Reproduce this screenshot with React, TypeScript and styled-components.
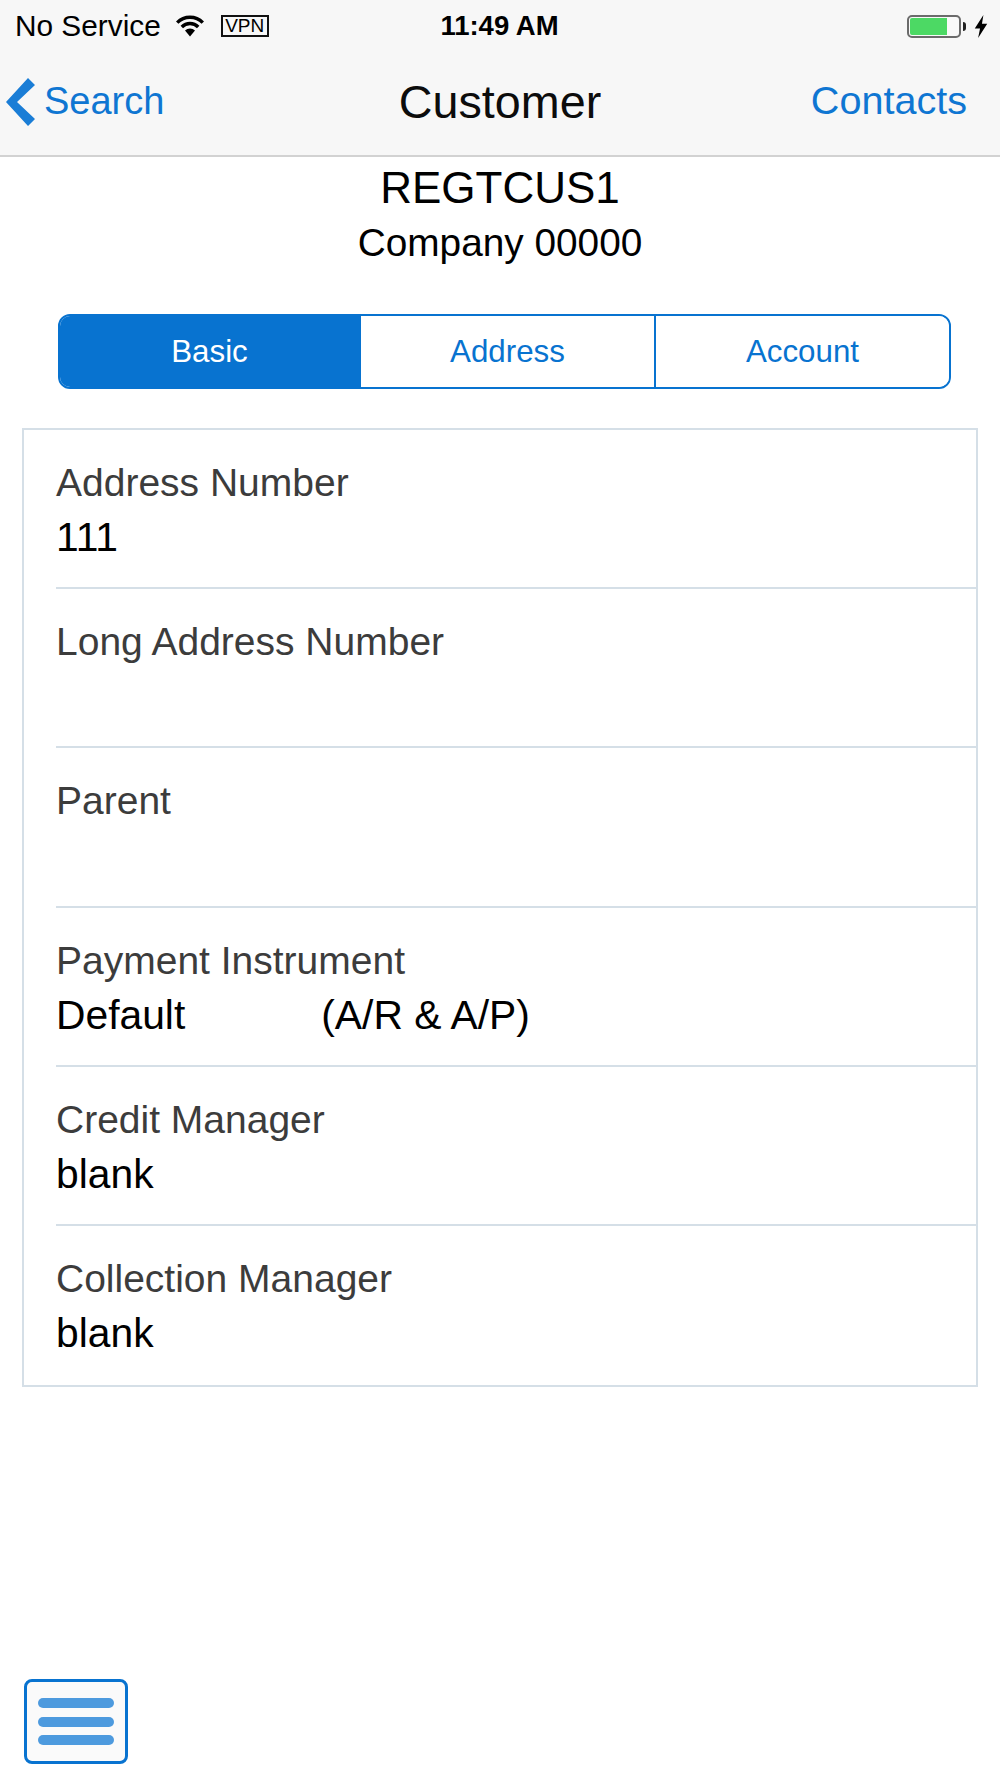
import React from "react";
import styled, { createGlobalStyle } from "styled-components";

const Global = createGlobalStyle`
  html, body { margin: 0; padding: 0; background: #fff; }
  body { font-family: "Liberation Sans", Arial, sans-serif; }
  * { box-sizing: border-box; }
`;

const Page = styled.div`
  width: 1000px;
  height: 1778px;
  display: flex;
  flex-direction: column;
  background: #fff;
  overflow: hidden;
`;

const Header = styled.header`
  height: 157px;
  flex: none;
  background: #f7f7f7;
  border-bottom: 2px solid #d2d2d2;
  display: flex;
  flex-direction: column;
`;

const StatusBar = styled.div`
  height: 50px;
  padding: 0 12px 0 15px;
  display: grid;
  grid-template-columns: 1fr auto 1fr;
  align-items: center;
  color: #000;
`;

const StatusLeft = styled.div`
  display: flex;
  align-items: center;
`;

const StatusRight = styled.div`
  display: flex;
  align-items: center;
  justify-content: flex-end;
`;

const Carrier = styled.span`
  font-size: 29.8px;
  line-height: 52px;
`;

const WifiIcon = styled.svg`
  width: 28px;
  height: 22px;
  margin-left: 15px;
  margin-top: -1px;
`;

const VpnBadge = styled.span`
  margin-left: 17px;
  width: 48px;
  height: 22px;
  border: 2px solid #111;
  font-size: 19px;
  line-height: 18px;
  text-align: center;
  margin-top: -1px;
`;

const Clock = styled.span`
  margin-right: 4px;
  font-size: 27.5px;
  font-weight: 700;
  line-height: 52px;
`;

const Battery = styled.div`
  width: 54px;
  height: 23px;
  border: 2px solid #6b6b6b;
  border-radius: 5px;
  padding: 1px;
  display: flex;
  background: #f9f9f9;
`;

const BatteryFill = styled.div<{ $level: number }>`
  width: ${(p) => p.$level}%;
  background: #4cd964;
  border-radius: 2px 0 0 2px;
`;

const BatteryCap = styled.div`
  width: 3px;
  height: 9px;
  margin-left: 2px;
  background: #222;
  border-radius: 0 4px 4px 0;
`;

const BoltIcon = styled.svg`
  width: 14px;
  height: 23px;
  margin-left: 8px;
`;

const NavBar = styled.nav`
  flex: 1;
  display: grid;
  grid-template-columns: 1fr auto 1fr;
  align-items: center;
  padding: 0 6px 4px;
`;

const BackLink = styled.a`
  display: flex;
  align-items: center;
  color: #0f76d2;
  font-size: 38px;
  line-height: 50px;
`;

const Chevron = styled.svg`
  width: 30px;
  height: 50px;
  margin: 3px 8px 0 0;
`;

const NavTitle = styled.h1`
  margin: 3px 0 0;
  font-weight: 400;
  font-size: 46.7px;
  line-height: 52px;
  color: #0c0c0c;
`;

const NavAction = styled.a`
  justify-self: end;
  margin: 0 27px 2px 0;
  color: #0f76d2;
  font-size: 39.6px;
  line-height: 50px;
`;

const Summary = styled.section`
  padding-top: 6px;
  text-align: center;
  color: #000;
`;

const SummaryTitle = styled.div`
  font-size: 44px;
  line-height: 50px;
`;

const SummarySub = styled.div`
  font-size: 38.8px;
  line-height: 50px;
  margin-top: 5px;
`;

const Tabs = styled.div`
  margin: 46px 49px 0 58px;
  height: 75px;
  display: grid;
  grid-template-columns: 299px 295px 1fr;
  border: 2px solid #0873d0;
  border-radius: 12px;
  overflow: hidden;
`;

const Tab = styled.div<{ $active?: boolean }>`
  display: flex;
  align-items: center;
  justify-content: center;
  padding-top: 1px;
  font-size: 31.3px;
  background: ${(p) => (p.$active ? "#0873d0" : "#fff")};
  color: ${(p) => (p.$active ? "#fff" : "#0873d0")};
  & + & { border-left: 2px solid #0873d0; }
`;

const Card = styled.section`
  margin: 39px 22px 0 22px;
  border: 2px solid #d5dfe7;
  display: flex;
  flex-direction: column;
`;

const Row = styled.div`
  height: 159.2px;
  margin-left: 32px;
  padding-top: 31px;
  border-bottom: 2px solid #d5dfe7;
  &:last-child { border-bottom: none; }
`;

const Label = styled.div`
  font-size: 39px;
  line-height: 44px;
  color: #3c3c3c;
`;

const Value = styled.div`
  font-size: 40.8px;
  line-height: 48px;
  margin-top: 8px;
  min-height: 48px;
  color: #000;
  white-space: pre;
`;

const Spacer = styled.div`
  flex: 1;
`;

const MenuButton = styled.button`
  flex: none;
  width: 104px;
  height: 85px;
  margin: 0 0 14px 24px;
  padding: 16px 11px;
  background: #fafafa;
  border: 3px solid #0873d0;
  border-radius: 8px;
  display: flex;
  flex-direction: column;
  justify-content: space-between;
`;

const MenuBar = styled.span`
  display: block;
  width: 100%;
  height: 10px;
  background: #4d9ade;
  border-radius: 5px;
`;

const rows = [
  { label: "Address Number", value: "111" },
  { label: "Long Address Number", value: "" },
  { label: "Parent", value: "" },
  { label: "Payment Instrument", value: "Default            (A/R & A/P)" },
  { label: "Credit Manager", value: "blank" },
  { label: "Collection Manager", value: "blank" },
];

export default function App() {
  return (
    <Page>
      <Global />
      <Header>
        <StatusBar>
          <StatusLeft>
            <Carrier>No Service</Carrier>
            <WifiIcon viewBox="0 0 28 22">
              <path d="M1.2 7.6 A18 18 0 0 1 26.8 7.6" fill="none" stroke="#000" strokeWidth="3.4" />
              <path d="M5.8 12 A11.5 11.5 0 0 1 22.2 12" fill="none" stroke="#000" strokeWidth="3.4" />
              <path d="M9 15.5 L14 21.5 L19 15.5 A7.5 7.5 0 0 0 9 15.5 Z" fill="#000" />
            </WifiIcon>
            <VpnBadge>VPN</VpnBadge>
          </StatusLeft>
          <Clock>11:49 AM</Clock>
          <StatusRight>
            <Battery>
              <BatteryFill $level={77} />
            </Battery>
            <BatteryCap />
            <BoltIcon viewBox="0 0 14 24">
              <path d="M9.5 0 L0.5 14 L6 14 L4 24 L13.5 9 L8 9 Z" fill="#000" />
            </BoltIcon>
          </StatusRight>
        </StatusBar>
        <NavBar>
          <BackLink>
            <Chevron viewBox="0 0 30 50">
              <path d="M0 25 L22 1 L29 8 L11 25 L29 42 L22 49 Z" fill="#1a7dd6" />
            </Chevron>
            Search
          </BackLink>
          <NavTitle>Customer</NavTitle>
          <NavAction>Contacts</NavAction>
        </NavBar>
      </Header>
      <Summary>
        <SummaryTitle>REGTCUS1</SummaryTitle>
        <SummarySub>Company 00000</SummarySub>
      </Summary>
      <Tabs>
        <Tab $active>Basic</Tab>
        <Tab>Address</Tab>
        <Tab>Account</Tab>
      </Tabs>
      <Card>
        {rows.map((r) => (
          <Row key={r.label}>
            <Label>{r.label}</Label>
            <Value>{r.value}</Value>
          </Row>
        ))}
      </Card>
      <Spacer />
      <MenuButton aria-label="Menu">
        <MenuBar />
        <MenuBar />
        <MenuBar />
      </MenuButton>
    </Page>
  );
}
